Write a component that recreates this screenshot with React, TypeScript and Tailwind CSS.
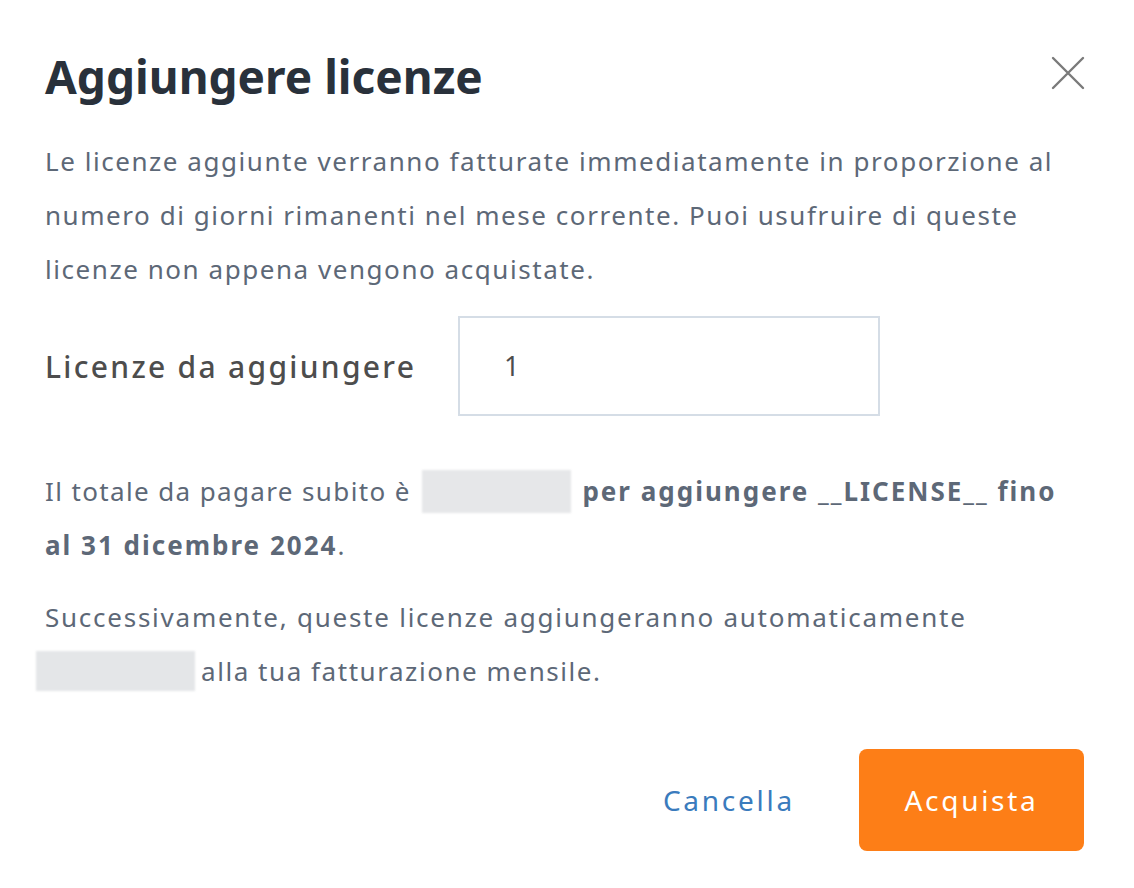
import React from "react";

export default function App() {
  return (
    <div className="w-[1134px] h-[888px] bg-white font-['Noto_Sans',sans-serif] text-[#5d6877]">
      <div className="pl-[45px] pr-[50px] pt-[46px]">
        <div className="flex items-start justify-between">
          <h1 className="text-[46px] leading-[60px] font-bold text-[#29313b] tracking-[0px]">Aggiungere licenze</h1>
          <button className="mt-[10px] mr-[-1px] w-[34px] h-[34px] flex items-center justify-center">
            <svg width="34" height="34" viewBox="0 0 34 34" fill="none" stroke="#7a7a7a" strokeWidth="2.4" strokeLinecap="round">
              <path d="M2 2 L32 32 M32 2 L2 32" />
            </svg>
          </button>
        </div>
        <p className="mt-[28px] text-[26px] leading-[54px] tracking-[1.55px] whitespace-nowrap">
          Le licenze aggiunte verranno fatturate immediatamente in proporzione al
          <br />
          numero di giorni rimanenti nel mese corrente. Puoi usufruire di queste
          <br />
          licenze non appena vengono acquistate.
        </p>
        <div className="mt-[20px] flex items-center">
          <span className="text-[30px] font-medium text-[#4d4d4d] tracking-[2.3px] w-[413px]">Licenze da aggiungere</span>
          <div className="w-[422px] h-[100px] border-2 border-[#d5dde6] flex items-center pl-[44px] text-[27px] text-[#4d4d4d]">1</div>
        </div>
        <p className="mt-[48px] text-[26px] leading-[54px] tracking-[1.55px] whitespace-nowrap">
          <span className="tracking-[1.37px]">Il totale da pagare subito è</span>{" "}
          <span className="inline-block align-middle w-[149px] h-[43px] bg-[#e6e7e9] blur-[1px] mx-[3px] -mt-[6px]"></span>{" "}
          <b className="font-bold tracking-[2px]">per aggiungere __LICENSE__ fino</b>
          <br />
          <b className="font-bold tracking-[2px]">al 31 dicembre 2024</b>.
        </p>
        <p className="mt-[18px] text-[26px] leading-[54px] tracking-[1.55px] -ml-[9px] whitespace-nowrap">
          <span className="ml-[9px] tracking-[1.75px]">Successivamente, queste licenze aggiungeranno automaticamente</span>
          <br />
          <span className="inline-block align-middle w-[159px] h-[40px] bg-[#e4e6e8] blur-[1px] mr-[6px] -mt-[6px]"></span>alla tua fatturazione mensile.
        </p>
        <div className="mt-[51px] flex justify-end items-center">
          <button className="text-[28px] text-[#3a7bbd] tracking-[2.75px] mr-[64px]">Cancella</button>
          <button className="w-[225px] h-[102px] bg-[#fd7e17] rounded-[8px] text-white text-[28px] tracking-[2.7px]">Acquista</button>
        </div>
      </div>
    </div>
  );
}
